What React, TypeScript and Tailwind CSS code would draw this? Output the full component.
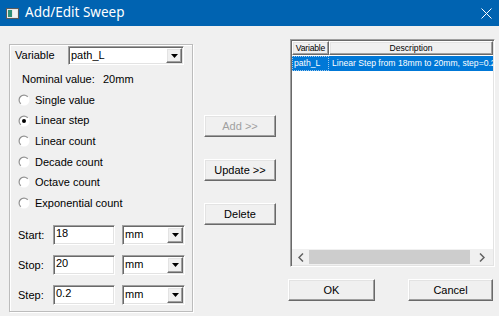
import React from "react";

const sunken =
  "border border-t-[#a0a0a0] border-l-[#a0a0a0] border-r-white border-b-white shadow-[inset_1px_1px_0_#696969,inset_-1px_-1px_0_#e3e3e3]";
const raised =
  "border border-t-white border-l-white border-r-[#696969] border-b-[#696969] shadow-[inset_-1px_-1px_0_#a0a0a0,inset_1px_1px_0_#e3e3e3]";

function Combo({ value, w, h }: { value: string; w: string; h: string }) {
  return (
    <div className={`${w} ${h} ${sunken} bg-white flex items-stretch`}>
      <div className="flex-1 pl-[2px] flex items-center leading-none">{value}</div>
      <div className={`w-[16px] my-[1px] mr-[1px] bg-[#f0f0f0] ${raised} flex items-center justify-center`}>
        <svg width="7" height="4" viewBox="0 0 7 4">
          <path d="M0 0H7L3.5 4Z" fill="#000" />
        </svg>
      </div>
    </div>
  );
}

function Radio({ checked }: { checked?: boolean }) {
  return (
    <svg width="12" height="12" viewBox="0 0 12 12">
      <defs>
        <linearGradient id="rg" x1="0" y1="0" x2="1" y2="1">
          <stop offset="0" stopColor="#808080" />
          <stop offset="0.5" stopColor="#a0a0a0" />
          <stop offset="0.55" stopColor="#ffffff" />
          <stop offset="1" stopColor="#ffffff" />
        </linearGradient>
      </defs>
      <circle cx="6" cy="6" r="5.5" fill="url(#rg)" />
      <circle cx="6" cy="6" r="4.3" fill="#fff" />
      {checked && <circle cx="6" cy="6" r="2" fill="#000" />}
    </svg>
  );
}

function Btn({ label, disabled, w, extra }: { label: string; disabled?: boolean; w: string; extra?: string }) {
  return (
    <div
      className={`${w} h-[22px] bg-[#f0f0f0] ${raised} flex items-center justify-center ${
        disabled ? "text-[#a0a0a0]" : "text-black"
      } ${extra ?? ""}`}
    >
      {label}
    </div>
  );
}

export default function App() {
  const radios = [
    "Single value",
    "Linear step",
    "Linear count",
    "Decade count",
    "Octave count",
    "Exponential count",
  ];
  const rows = [
    ["Start:", "18"],
    ["Stop:", "20"],
    ["Step:", "0.2"],
  ];
  return (
    <div className="w-[499px] h-[316px] bg-[#f0f0f0] overflow-hidden flex flex-col font-['Liberation_Sans',Arial,sans-serif] text-[11px] text-black">
      <div className="h-[26px] bg-[#0063b1] flex items-center shrink-0">
        <svg className="ml-[6px]" width="13" height="11" viewBox="0 0 13 11">
          <rect x="0.5" y="0.5" width="12" height="10" fill="#e8e8e8" stroke="#5a5a5a" />
          <rect x="2" y="2" width="4" height="7" fill="#2f8f78" />
          <rect x="7" y="2" width="4" height="7" fill="#f4f4f4" />
        </svg>
        <span className="ml-[6px] text-white text-[13.5px] font-['Noto_Sans',sans-serif] leading-none">
          Add/Edit Sweep
        </span>
        <svg className="ml-auto mr-[7px]" width="11" height="11" viewBox="0 0 11 11">
          <path d="M0.5 0.5L10.5 10.5M10.5 0.5L0.5 10.5" stroke="#fff" strokeWidth="1" />
        </svg>
      </div>

      <div className="flex flex-1 items-start">
        {/* left group box */}
        <div className="ml-[9px] mt-[18px] w-[184px] h-[268px] border border-[#bcbcbc] shadow-[inset_1px_1px_0_#fff,1px_1px_0_#fff] flex flex-col">
          <div className="mt-[1px] pl-[5px] flex items-center h-[19px]">
            <span className="w-[53px]">Variable</span>
            <Combo value="path_L" w="w-[116px]" h="h-[19px]" />
          </div>
          <div className="mt-[7px] pl-[12px] h-[14px] flex items-center">
            <span className="w-[81px]">Nominal value:</span>
            <span>20mm</span>
          </div>
          <div className="mt-[3.7px] flex flex-col">
            {radios.map((r, i) => (
              <div key={r} className="h-[20.6px] pl-[8px] flex items-center gap-[5px]">
                <Radio checked={i === 1} />
                <span>{r}</span>
              </div>
            ))}
          </div>
          <div className="mt-[11.5px] flex flex-col gap-[10px]">
            {rows.map(([l, v]) => (
              <div key={l} className="pl-[8px] flex items-center h-[20px]">
                <span className="w-[35px]">{l}</span>
                <div className={`w-[62px] h-[20px] ${sunken} bg-white pl-[2px] leading-none pt-[2px]`}>{v}</div>
                <div className="ml-[7px]">
                  <Combo value="mm" w="w-[63px]" h="h-[20px]" />
                </div>
              </div>
            ))}
          </div>
        </div>

        {/* middle buttons */}
        <div className="ml-[11px] mt-[89px] flex flex-col gap-[22px]">
          <Btn label="Add >>" disabled w="w-[72px]" />
          <Btn label="Update >>" w="w-[72px]" />
          <Btn label="Delete" w="w-[72px]" />
        </div>

        {/* right list */}
        <div className="ml-[14px] mt-[13px] flex flex-col w-[205px]">
          <div className={`h-[228px] ${sunken} bg-white flex flex-col p-[1px] text-[8.6px]`}>
            <div className="flex h-[14px] shrink-0">
              <div className={`w-[37px] bg-[#f0f0f0] ${raised} flex items-center justify-center leading-none tracking-[-0.2px]`}>
                Variable
              </div>
              <div className={`flex-1 bg-[#f0f0f0] ${raised} flex items-center justify-center leading-none`}>
                Description
              </div>
            </div>
            <div className="flex h-[15px] mt-[1px] shrink-0 bg-[#0078d7] text-white overflow-hidden whitespace-nowrap">
              <div className="w-[37px] border border-dotted border-[#9ec9ef] pl-[1px] flex items-center leading-none">
                path_L
              </div>
              <div className="flex-1 pl-[3px] flex items-center leading-none overflow-hidden">
                Linear Step from 18mm to 20mm, step=0.2mm
              </div>
            </div>
            <div className="flex-1" />
            <div className="h-[16px] flex bg-[#f0f0f0] shrink-0">
              <div className="w-[17px] flex items-center justify-center">
                <svg width="6" height="9" viewBox="0 0 6 9">
                  <path d="M5 0.5L1 4.5L5 8.5" stroke="#606060" strokeWidth="1.5" fill="none" />
                </svg>
              </div>
              <div className="w-[161px] my-[1px] bg-[#cdcdcd]" />
              <div className="flex-1 flex items-center justify-center">
                <svg width="6" height="9" viewBox="0 0 6 9">
                  <path d="M1 0.5L5 4.5L1 8.5" stroke="#606060" strokeWidth="1.5" fill="none" />
                </svg>
              </div>
            </div>
          </div>
          <div className="mt-[12px] -ml-[2px] flex justify-between">
            <Btn label="OK" w="w-[87px]" />
            <Btn label="Cancel" w="w-[85px]" extra="mr-[2px]" />
          </div>
        </div>
      </div>
    </div>
  );
}
